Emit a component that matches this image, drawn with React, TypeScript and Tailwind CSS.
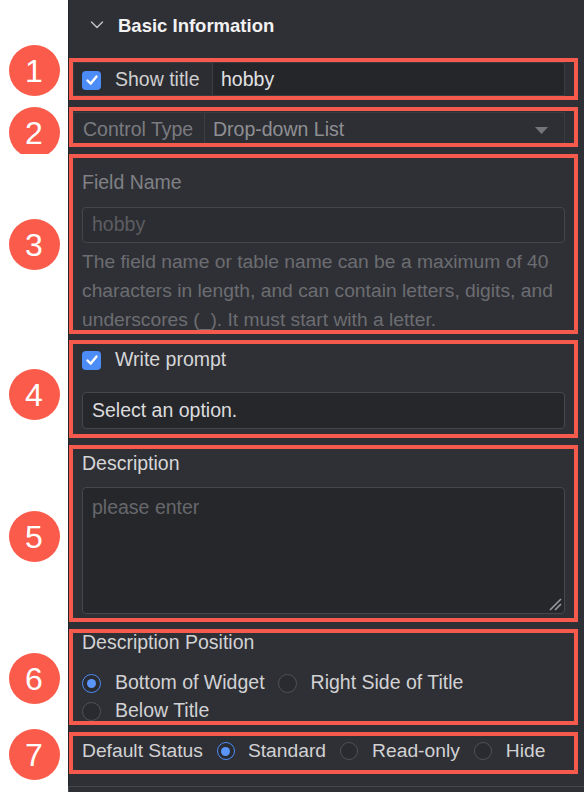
import React from "react";

const font = { fontFamily: '"Liberation Sans", Arial, sans-serif' };

function Badge({ n, className }: { n: number; className: string }) {
    return (
        <div
            className={`flex h-[51px] w-[51px] shrink-0 items-center justify-center rounded-full bg-[#fa5b4b] text-[32px] leading-none text-white ${className}`}>
            {n}
        </div>
    );
}

function Row({ n, badge, boxClass, children, pad = "pb-[7px]" }: {
    n: number;
    badge: string;
    boxClass: string;
    children: React.ReactNode;
    pad?: string;
}) {
    return (
        <div className="flex">
            <div className="flex w-[68px] shrink-0 justify-center bg-white">
                {/* zero-height holder so the badge never changes the row height */}
                <div className="h-0">
                    <Badge n={n} className={badge}/>
                </div>
            </div>
            <div className={`flex-1 border-l border-[#232428] bg-[#2f3035] pr-[6px] ${pad}`}>
                <div className={`overflow-hidden border-4 border-[#f65a4c] ${boxClass}`}>
                    {children}
                </div>
            </div>
        </div>
    );
}

function Checkbox() {
    return (
        <div className="flex h-[19px] w-[19px] shrink-0 items-center justify-center rounded-[4px] bg-[#4c8cf6]">
            <svg width="14" height="14" viewBox="0 0 14 14" fill="none">
                <polyline points="2.5,7.5 5.8,10.6 11.5,3.4" stroke="white" strokeWidth="2.4"
                          strokeLinecap="round" strokeLinejoin="round"/>
            </svg>
        </div>
    );
}

function Radio({ checked, small }: { checked?: boolean; small?: boolean }) {
    const size = small ? "h-[18px] w-[18px]" : "h-[19px] w-[19px]";
    if (checked) {
        return (
            <div className={`flex ${size} shrink-0 items-center justify-center rounded-full border-[1.5px] border-[#4c8cf6] bg-[#2a2b30]`}>
                <div className="h-[9px] w-[9px] rounded-full bg-[#5a95fa]"/>
            </div>
        );
    }
    return <div className={`${size} shrink-0 rounded-full border border-[#505156] bg-[#2a2b30]`}/>;
}

export default function App() {
    return (
        <div className="h-[792px] w-[584px] overflow-hidden bg-white text-[19.5px]" style={font}>
            {/* header */}
            <div className="flex h-[58px]">
                <div className="w-[68px] shrink-0 bg-white"/>
                <div className="flex flex-1 items-start border-l border-[#232428] bg-[#2f3035] pl-[21px] pt-[13px]">
                    <svg width="14" height="24" viewBox="0 0 14 24" fill="none" className="mr-[14px]">
                        <polyline points="1.5,9 7,14.5 12.5,9" stroke="#c4c4c6" strokeWidth="1.4"
                                  strokeLinecap="round" strokeLinejoin="round"/>
                    </svg>
                    <span className="text-[18.5px] font-bold leading-[25px] text-[#f2f2f3]">Basic Information</span>
                </div>
            </div>

            {/* 1 */}
            <Row n={1} badge="-mt-[13px]" boxClass="h-[42px]">
                <div className="mr-[9px] flex h-full border border-[#3a3b40] bg-[#2c2d32]">
                    <div className="flex w-[139px] items-center border-r border-[#3d3e43] pl-[8px] pt-[2px]">
                        <Checkbox/>
                        <span className="ml-[14px] text-[#cfcfd1]">Show title</span>
                    </div>
                    <div className="flex flex-1 items-center bg-[#25262a] pl-[8px] pt-[2px] text-[#e2e2e4]">hobby</div>
                </div>
            </Row>

            {/* 2 */}
            <Row n={2} badge="mt-0" boxClass="h-[40px]">
                <div className="mr-[9px] mt-[1px] flex h-[36px] border border-[#3a3b40] bg-[#2e2f34]">
                    <div className="flex w-[131px] items-center border-r border-[#3d3e43] pl-[9px] text-[#7a7b80]">
                        Control Type
                    </div>
                    <div className="flex flex-1 items-center justify-between pl-[8px] pr-[16px] text-[#8e8f93]">
                        <span>Drop-down List</span>
                        <svg width="13" height="7" viewBox="0 0 13 7">
                            <polygon points="0,0 13,0 6.5,7" fill="#74757a"/>
                        </svg>
                    </div>
                </div>
            </Row>

            {/* 3 */}
            <Row n={3} badge="mt-[65px]" boxClass="h-[180px]" pad="pb-[6px]">
                <div className="pl-[9px] pr-[9px] pt-[12px]">
                    <div className="leading-[24px] text-[#808185]">Field Name</div>
                    <div className="mt-[13px] flex h-[36px] items-center rounded-[4px] border border-[#45464b] bg-[#2c2d32] pl-[9px] text-[#5c5d62]">
                        hobby
                    </div>
                    <p className="mt-[4px] whitespace-nowrap text-[19.25px] leading-[29px] text-[#6c6d72]">
                        The field name or table name can be a maximum of 40<br/>
                        characters in length, and can contain letters, digits, and<br/>
                        underscores (_). It must start with a letter.
                    </p>
                </div>
            </Row>

            {/* 4 */}
            <Row n={4} badge="mt-[29px]" boxClass="h-[98px]">
                <div className="pl-[9px] pr-[9px] pt-[6px]">
                    <div className="flex h-[20px] items-center">
                        <Checkbox/>
                        <span className="ml-[14px] text-[#d6d6d8]">Write prompt</span>
                    </div>
                    <div className="mt-[22px] flex h-[37px] items-center rounded-[4px] border border-[#46474c] bg-[#26272b] pl-[9px] text-[#dcdcde]">
                        Select an option.
                    </div>
                </div>
            </Row>

            {/* 5 */}
            <Row n={5} badge="mt-[66px]" boxClass="h-[177px]">
                <div className="pl-[9px] pr-[9px] pt-[2px]">
                    <div className="leading-[24px] text-[#d6d6d8]">Description</div>
                    <div className="relative mt-[12px] h-[127px] rounded-[4px] border border-[#46474c] bg-[#26272b] pl-[9px] pt-[7px] leading-[24px] text-[#66676c]">
                        please enter
                        <svg width="13" height="13" viewBox="0 0 13 13" className="absolute bottom-[2px] right-[2px]">
                            <line x1="1" y1="12" x2="12" y2="1" stroke="#9a9ba0" strokeWidth="1.6"/>
                            <line x1="6" y1="12" x2="12" y2="6" stroke="#9a9ba0" strokeWidth="1.6"/>
                        </svg>
                    </div>
                </div>
            </Row>

            {/* 6 */}
            <Row n={6} badge="mt-[24px]" boxClass="h-[96px]">
                <div className="pl-[9px] pr-[9px]">
                    <div className="leading-[18px] text-[#d2d2d4]">Description Position</div>
                    <div className="mt-[20px] flex h-[24px] items-center text-[#d2d2d4]">
                        <Radio checked/>
                        <span className="ml-[14px]">Bottom of Widget</span>
                        <span className="ml-[13px]"><Radio/></span>
                        <span className="ml-[14px]">Right Side of Title</span>
                    </div>
                    <div className="mt-[4px] flex h-[24px] items-center text-[#d2d2d4]">
                        <Radio/>
                        <span className="ml-[14px]">Below Title</span>
                    </div>
                </div>
            </Row>

            {/* 7 */}
            <Row n={7} badge="-mt-[3px]" boxClass="h-[42px]" pad="pb-[12px]">
                <div className="mt-[3px] flex h-[24px] items-center pl-[9px] text-[19.25px] text-[#d2d2d4]">
                    <span>Default Status</span>
                    <span className="ml-[14px] flex"><Radio checked small/></span>
                    <span className="ml-[13px]">Standard</span>
                    <span className="ml-[14px] flex"><Radio small/></span>
                    <span className="ml-[14px]">Read-only</span>
                    <span className="ml-[14px] flex"><Radio small/></span>
                    <span className="ml-[14px]">Hide</span>
                </div>
            </Row>

            <div className="flex">
                <div className="w-[68px] shrink-0 bg-white"/>
                <div className="h-[20px] flex-1 border-l border-t border-[#46474c] bg-[#2f3035]"/>
            </div>
        </div>
    );
}
